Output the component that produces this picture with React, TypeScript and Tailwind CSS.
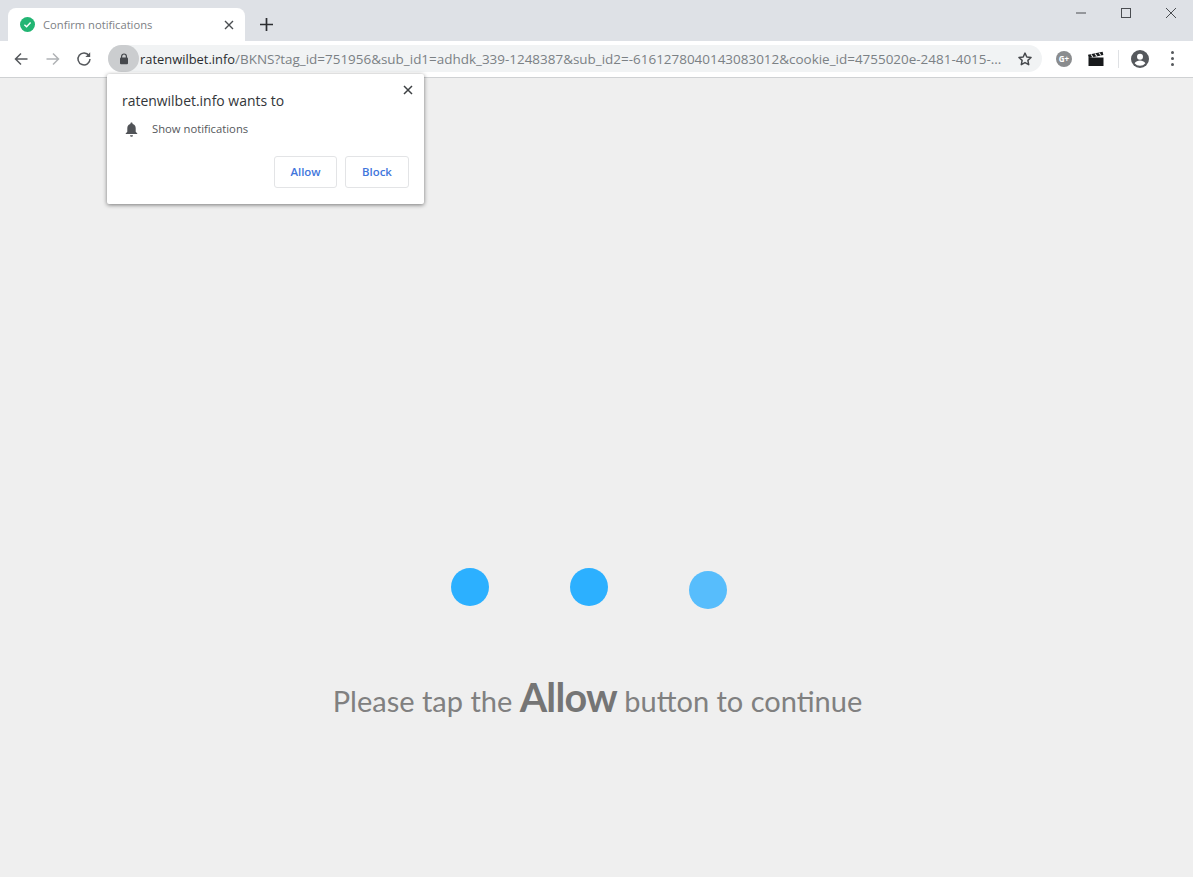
import React from "react";

const ui = "font-['Open_Sans','Noto_Sans',sans-serif]";

function Tab() {
  return (
    <div className="relative ml-2 mt-2 flex h-[33px] w-[237px] items-center rounded-t-[8px] bg-white pl-3 pr-[11px]">
      <svg width="15" height="15" viewBox="0 0 15 15" className="shrink-0">
        <circle cx="7.5" cy="7.5" r="7.5" fill="#22b573" />
        <path d="M4.4 7.7l2.2 2.1 4-4.2" fill="none" stroke="#fff" strokeWidth="1.4" />
      </svg>
      <span className="ml-2 flex-1 text-[11.2px] leading-4 text-[#7d8185]">Confirm notifications</span>
      <svg width="10" height="10" viewBox="0 0 10 10">
        <path d="M1 1l8 8M9 1l-8 8" stroke="#4a4d51" strokeWidth="1.4" />
      </svg>
    </div>
  );
}

function TabStrip() {
  return (
    <div className="relative flex h-[41px] bg-[#dee1e6]">
      <Tab />
      <svg width="13" height="13" viewBox="0 0 13 13" className="ml-[15px] mt-[18px]">
        <path d="M6.5 0v13M0 6.5h13" stroke="#2b2d30" strokeWidth="1.7" />
      </svg>
      <div className="ml-auto mr-[16px] mt-[7px] flex items-start gap-[33px]">
        <svg width="12" height="12" viewBox="0 0 12 12">
          <path d="M1 6h10" stroke="#4a4d51" strokeWidth="1" />
        </svg>
        <svg width="12" height="12" viewBox="0 0 12 12">
          <rect x="1.5" y="1.5" width="9" height="9" fill="none" stroke="#4a4d51" strokeWidth="1" />
        </svg>
        <svg width="12" height="12" viewBox="0 0 12 12">
          <path d="M1 1l10 10M11 1L1 11" stroke="#4a4d51" strokeWidth="1" />
        </svg>
      </div>
    </div>
  );
}

function NavIcons() {
  return (
    <div className="flex w-[108px] shrink-0 items-center pl-[14px]">
      <svg width="14" height="14" viewBox="0 0 14 14">
        <path d="M13.5 7H1.5M7 1.5L1.5 7 7 12.5" fill="none" stroke="#55585c" strokeWidth="1.5" />
      </svg>
      <svg width="14" height="14" viewBox="0 0 14 14" className="ml-[18px]">
        <path d="M.5 7h12M7 1.5L12.5 7 7 12.5" fill="none" stroke="#b0b3b6" strokeWidth="1.5" />
      </svg>
      <svg width="16" height="16" viewBox="0 0 16 16" className="ml-[16px]">
        <path d="M13 4.6A6 6 0 1 0 14 8" fill="none" stroke="#55585c" strokeWidth="1.5" />
        <path d="M14.2 1.2v4.8H9.4z" fill="#55585c" />
      </svg>
    </div>
  );
}

function Omnibox() {
  return (
    <div className="flex h-[27px] w-[934px] shrink-0 items-center rounded-full bg-[#f1f3f4]">
      <div className="flex h-[27px] w-[31px] shrink-0 items-center justify-center rounded-full bg-[#cbcdcf]">
        <svg width="10" height="12" viewBox="0 0 10 12">
          <path d="M2.6 5V3.4a2.4 2.4 0 0 1 4.8 0V5" fill="none" stroke="#45484c" strokeWidth="1.2" />
          <rect x="1" y="4.6" width="8" height="6.6" rx="1" fill="#45484c" />
        </svg>
      </div>
      <div className="ml-px mt-[2px] flex-1 whitespace-nowrap text-[13.46px] text-[#7b8185]">
        <span className="text-[12.9px] text-[#2a2c2f]">ratenwilbet.info</span>/BKNS?tag_id=751956&amp;sub_id1=adhdk_339-1248387&amp;sub_id2=-6161278040143083012&amp;cookie_id=4755020e-2481-4015-...
      </div>
      <svg width="16" height="16" viewBox="0 0 24 24" className="mr-[9px] shrink-0">
        <path d="M12 3.2l2.7 5.900 6.400.7-4.800 4.300 1.300 6.400L12 17.300l-5.600 3.200 1.300-6.400-4.800-4.300 6.400-.7z" fill="none" stroke="#45484c" strokeWidth="2.2" strokeLinejoin="round" />
      </svg>
    </div>
  );
}

function Extensions() {
  return (
    <div className="flex flex-1 items-center pl-[14px]">
      <div className="flex h-4 w-4 items-center justify-center rounded-full bg-[#8a8c8e] text-[8px] font-bold leading-none text-white">G+</div>
      <svg width="18" height="16" viewBox="0 0 18 16" className="ml-[15px]">
        <path d="M1.5 6.5h15v8.500h-15z" fill="#17191b" />
        <path d="M1 3.800L15.600.8l.8 3.200L1.800 7z" fill="#17191b" />
        <path d="M4 3.400l2 2.800M8 2.600l2 2.800M12 1.700l2 2.800" stroke="#e8e8e8" strokeWidth="1.1" />
      </svg>
      <div className="ml-[13px] h-[18px] w-px bg-[#dfe1e4]" />
      <svg width="18" height="18" viewBox="0 0 18 18" className="ml-[12px]">
        <circle cx="9" cy="9" r="9" fill="#55585c" />
        <circle cx="9" cy="6.800" r="3" fill="#fff" />
        <path d="M3.600 13.200c1.200-2 3.400-2.800 5.400-2.800s4.200.8 5.400 2.800a7 7 0 0 1-10.800 0z" fill="#fff" />
      </svg>
      <div className="ml-[22px] flex flex-col gap-[3px]">
        <span className="h-[3px] w-[3px] rounded-full bg-[#55585c]" />
        <span className="h-[3px] w-[3px] rounded-full bg-[#55585c]" />
        <span className="h-[3px] w-[3px] rounded-full bg-[#55585c]" />
      </div>
    </div>
  );
}

function Popup() {
  return (
    <div className="absolute left-[107px] top-[74px] h-[130px] w-[317px] rounded-[2px] bg-white shadow-[0_1px_4px_rgba(0,0,0,0.5)]">
      <svg width="10" height="10" viewBox="0 0 10 10" className="absolute right-[11px] top-[11px]">
        <path d="M1 1l8 8M9 1l-8 8" stroke="#3d4043" strokeWidth="1.5" />
      </svg>
      <div className="pl-[15px] pt-[17px] text-[13.95px] leading-5 text-[#333639]">ratenwilbet.info wants to</div>
      <div className="mt-[10px] flex items-center pl-[18px]">
        <svg width="13" height="15" viewBox="0 0 13 15">
          <path d="M6.500 0.500c.7 0 1.100.5 1.100 1.100v.5c2 .5 3.100 2.200 3.100 4.200v3.400l1.600 1.800v.5H.7v-.5l1.600-1.800V6.300c0-2 1.100-3.700 3.100-4.200v-.5c0-.6.4-1.100 1.100-1.100zM5 13.300h3a1.500 1.500 0 0 1-3 0z" fill="#505357" />
        </svg>
        <span className="ml-[14px] text-[11.25px] leading-4 text-[#55585c]">Show notifications</span>
      </div>
      <div className="absolute bottom-4 right-[15px] flex gap-2">
        <button className="flex h-8 w-[63px] items-center justify-center rounded-[3px] border border-[#e3e4e6] bg-white text-[11.4px] font-semibold text-[#3f76dc]">Allow</button>
        <button className="flex h-8 w-[64px] items-center justify-center rounded-[3px] border border-[#e3e4e6] bg-white text-[11.4px] font-semibold text-[#3f76dc]">Block</button>
      </div>
    </div>
  );
}

function Main() {
  return (
    <main className="flex h-[799px] flex-col items-center bg-[#efefef] pt-[490px]">
      <div className="flex items-start gap-[81px] pr-[16px]">
        <div className="h-[38px] w-[38px] rounded-full bg-[#2cb0ff] blur-[0.6px]" />
        <div className="h-[38px] w-[38px] rounded-full bg-[#2cb0ff] blur-[0.6px]" />
        <div className="mt-[3px] h-[38px] w-[38px] rounded-full bg-[#57bdfc] blur-[0.6px]" />
      </div>
      <p className="mt-[60px] whitespace-nowrap pl-[2px] font-['Lato','Noto_Sans',sans-serif] text-[29px] leading-[56px] text-[#808080]">
        Please tap the <b className="text-[39.5px] font-bold tracking-[-0.02em] text-[#757575]">Allow</b> button to continue
      </p>
    </main>
  );
}

export default function App() {
  return (
    <div className={`relative h-[877px] w-[1193px] overflow-hidden ${ui}`}>
      <TabStrip />
      <div className="flex h-[37px] items-center border-b border-[#cfd1d3] bg-white pb-[2px] pt-[1px]">
        <NavIcons />
        <Omnibox />
        <Extensions />
      </div>
      <Main />
      <Popup />
    </div>
  );
}
